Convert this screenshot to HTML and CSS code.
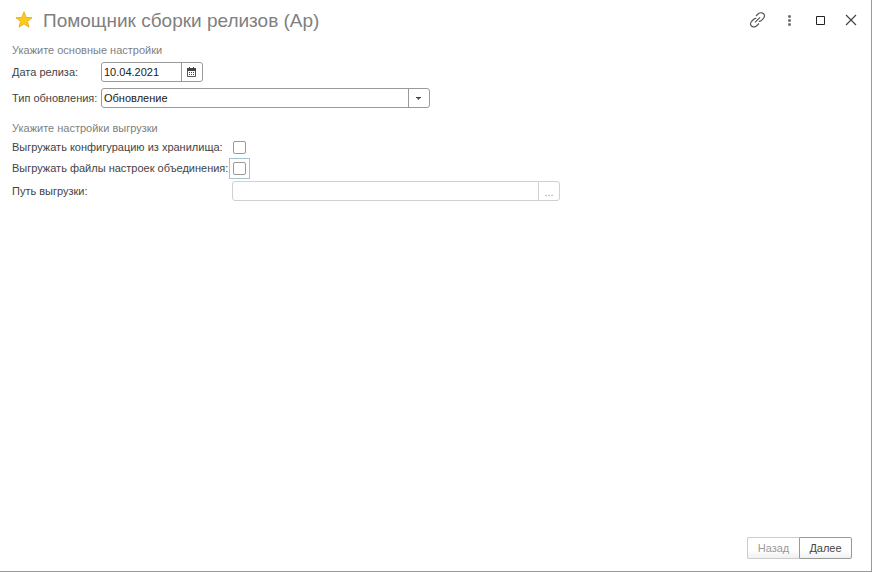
FILE: index.html
```html
<!DOCTYPE html>
<html lang="ru">
<head>
<meta charset="utf-8">
<title>Помощник сборки релизов (Ар)</title>
<link rel="stylesheet" href="styles.css">
</head>
<body>
<form class="window">
  <header class="titlebar">
    <button type="button" class="icon-button" aria-label="Избранное">
      <svg width="18" height="18" viewBox="0 0 18 18"><path d="M9 .8l2.100 5.600 6 .3-4.700 3.700 1.600 5.800L9 12.900l-5 3.300 1.600-5.800L.9 6.700l6-.3z" fill="#fbcb1c" stroke="#e9b520" stroke-width="1"/></svg>
    </button>
    <h1 class="title">Помощник сборки релизов (Ар)</h1>
    <div class="tools">
      <button type="button" class="icon-button" aria-label="Получить ссылку">
        <svg width="18" height="18" viewBox="0 0 18 18" fill="none" stroke="#555" stroke-width="1.200"><path d="M7 5L9.500 2.500Q11 1.500 13 1.800Q15 2.300 15.500 4.300Q15.700 6 14.500 7.300L12 9.800Q11 10.500 9.800 10.200M10 12.500L7.500 15Q6 16.300 4 15.800Q2 15.300 1.500 13.300Q1.300 12 2.500 10.500L5 8Q6 7.300 7.300 7.500M6 11.300l5-5"/></svg>
      </button>
      <button type="button" class="icon-button" aria-label="Ещё">
        <svg width="18" height="18" viewBox="0 0 18 18" fill="#666"><path d="M8 4h3v3H8zM8 8h3v3H8zM8 12h3v3H8z" opacity=".35"/><circle cx="9.500" cy="5.500" r="1.300"/><circle cx="9.500" cy="9.500" r="1.300"/><circle cx="9.500" cy="13.500" r="1.300"/></svg>
      </button>
      <button type="button" class="icon-button" aria-label="Развернуть">
        <svg width="18" height="18" viewBox="0 0 18 18"><path d="M5.500 5.500h8v8h-8z" fill="none" stroke="#222"/></svg>
      </button>
      <button type="button" class="icon-button" aria-label="Закрыть">
        <svg width="18" height="18" viewBox="0 0 18 18"><path d="M4 4l10 10M14 4L4 14" stroke="#444" stroke-width="1.200"/></svg>
      </button>
    </div>
  </header>
  <main class="content">
    <section class="group main-group">
      <h2 class="group-title">Укажите основные настройки</h2>
      <label for="date">Дата релиза:</label>
      <div class="field date-field">
        <input id="date" type="text" value="10.04.2021">
        <button type="button" class="field-button" aria-label="Выбрать дату">
          <svg width="10" height="10" viewBox="0 0 10 10"><path d="M.5 1.500h8v8h-8z" fill="none" stroke="#555"/><path d="M0 1h9v3H0zM2 0h1v1H2zM6 0h1v1H6zM2 5h1v1H2zM4 5h1v1H4zM6 5h1v1H6zM2 7h1v1H2zM4 7h1v1H4zM6 7h1v1H6z" fill="#444"/></svg>
        </button>
      </div>
      <label for="kind">Тип обновления:</label>
      <div class="field kind-field">
        <select id="kind"><option>Обновление</option></select>
        <span class="field-button arrow" aria-hidden="true">
          <svg width="6" height="3" viewBox="0 0 6 3"><path d="M0 0h5v1H4L2.500 3L1 1H0z" fill="#444"/></svg>
        </span>
      </div>
    </section>
    <section class="group export-group">
      <h2 class="group-title">Укажите настройки выгрузки</h2>
      <label for="config">Выгружать конфигурацию из хранилища:</label>
      <span class="check"><input id="config" type="checkbox"></span>
      <label for="files">Выгружать файлы настроек объединения:</label>
      <span class="check focused"><input id="files" type="checkbox"></span>
      <label for="path">Путь выгрузки:</label>
      <div class="field path-field">
        <input id="path" type="text" disabled>
        <button type="button" class="field-button" disabled>...</button>
      </div>
    </section>
  </main>
  <footer class="actions">
    <button type="button" class="action back" disabled>Назад</button>
    <button type="submit" class="action next">Далее</button>
  </footer>
</form>
</body>
</html>
```
FILE: styles.css
```css
* { box-sizing: border-box; }
body {
  margin: 0;
  background: #fff;
  color: #444;
  font: 11px/16px "Liberation Sans", Arial, sans-serif;
}
button, input, select { margin: 0; font: inherit; color: inherit; }
.window {
  display: flex;
  flex-direction: column;
  min-height: 100vh;
  border-right: 1px solid #999;
  border-bottom: 1px solid #999;
}
.titlebar {
  display: flex;
  align-items: center;
  height: 40px;
  padding: 0 11px 0 15px;
}
.title {
  flex: 1;
  margin: 0 0 0 10px;
  padding-top: 2px;
  color: #808080;
  font: 19px/24px "Liberation Sans", Arial, sans-serif;
}
.tools { display: flex; gap: 13px; }
.icon-button { display: flex; padding: 0; border: 0; background: none; }
.content {
  display: flex;
  flex: 1;
  flex-direction: column;
  gap: 12px;
  padding: 2px 12px;
}
.group { display: grid; justify-content: start; align-items: center; }
.main-group {
  grid-template-columns: 89px minmax(0, 329px);
  grid-template-rows: 14px 20px 20px;
  row-gap: 6px;
}
.export-group {
  grid-template-columns: 220px minmax(0, 328px);
  grid-template-rows: 16px 22px 20px 26px;
}
.group-title {
  grid-column: 1 / -1;
  align-self: start;
  margin: 0;
  color: #808080;
  font-size: 11px;
  font-weight: 400;
}
label { white-space: nowrap; }
.field {
  display: flex;
  height: 20px;
  border: 1px solid #999;
  border-radius: 3px;
  background: #fff;
}
.date-field { width: 102px; }
.field input, .field select {
  flex: 1;
  min-width: 0;
  padding: 0 2px;
  border: 0;
  outline: 0;
  background: none;
  color: #222;
  appearance: none;
}
.field-button {
  display: flex;
  flex: none;
  align-items: center;
  justify-content: center;
  width: 21px;
  padding: 0;
  border: 0;
  border-left: 1px solid #999;
  background: none;
}
.kind-field { position: relative; }
.kind-field select { padding-right: 23px; }
.arrow { position: absolute; inset: 0 0 0 auto; pointer-events: none; }
.path-field, .path-field .field-button { border-color: #d0d0d0; }
.path-field .field-button { padding-top: 2px; color: #999; }
.check {
  display: flex;
  align-items: center;
  justify-content: center;
  justify-self: start;
  width: 21px;
  height: 21px;
  margin-left: -3px;
  border: 1px solid transparent;
}
.check.focused { border-color: #a9c3cd; }
.check input {
  width: 13px;
  height: 13px;
  margin: 0;
  border: 1px solid #999;
  border-radius: 2px;
  background: #fff;
  appearance: none;
}
.actions {
  display: flex;
  justify-content: flex-end;
  padding: 0 19px 12px;
}
.action {
  height: 22px;
  width: 53px;
  padding: 0;
  border: 1px solid #999;
  border-radius: 0 2px 2px 0;
  background: linear-gradient(#fff 60%, #f0f0f0);
}
.back {
  width: 52px;
  border-color: #ccc;
  border-right: 0;
  border-radius: 2px 0 0 2px;
  color: #999;
}
```
